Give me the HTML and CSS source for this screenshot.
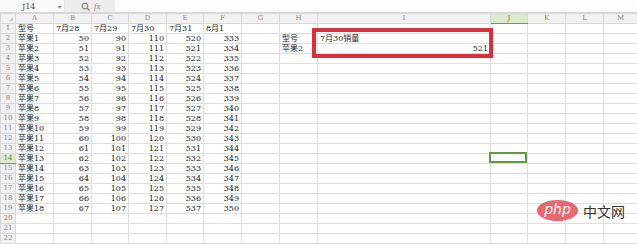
FILE: index.html
```html
<!DOCTYPE html>
<html lang="zh">
<head>
  <meta charset="UTF-8" />
  <title>销量表</title>
  <link rel="stylesheet" href="styles.css">
</head>
<body>
  <div class="formula-bar">
    <div class="name-box">
      <span class="cell-ref">J14</span>
      <span class="drop">&#9662;</span>
    </div>
    <div class="fx-tools">
      <svg class="zoom-icon" width="9" height="9" viewBox="0 0 9 9">
        <circle cx="4" cy="4" r="2.8" fill="none" stroke="#888" stroke-width="1.2" />
        <line x1="6" y1="6" x2="8.5" y2="8.5" stroke="#888" stroke-width="1.3" />
      </svg>
      <span class="fx">fx</span>
    </div>
    <div class="formula-input"></div>
  </div>

  <div class="sheet">
    <table class="grid">
      <colgroup>
        <col class="c-head">
        <col class="w38"><col class="w38"><col class="w37"><col class="w38">
        <col class="w37"><col class="w38"><col class="w38"><col class="w38">
        <col class="w-wide"><col class="w37"><col class="w38"><col class="w38">
        <col class="w-last">
      </colgroup>
      <thead>
        <tr>
          <th class="corner"><span class="tri"></span></th>
          <th>A</th><th>B</th><th>C</th><th>D</th><th>E</th><th>F</th><th>G</th><th>H</th>
          <th>I</th><th class="sel">J</th><th>K</th><th>L</th><th>M</th>
        </tr>
      </thead>
      <tbody id="rows"></tbody>
    </table>

    <div class="red-mark"></div>
    <div class="active-cell"></div>
  </div>

  <div class="watermark">
    <span class="php">php</span>
    <span class="cn">中文网</span>
  </div>

  <script>
    const rows = document.getElementById('rows');
    const colsCount = 13;

    function makeRow(n, cells) {
      const tr = document.createElement('tr');
      const th = document.createElement('th');
      th.textContent = n;
      if (n === 14) th.className = 'sel';
      tr.appendChild(th);
      for (let i = 0; i < colsCount; i++) {
        const td = document.createElement('td');
        const v = cells[i];
        if (v !== undefined && v !== '') {
          td.textContent = v;
          if (typeof v === 'number') td.className = 'num';
        }
        tr.appendChild(td);
      }
      rows.appendChild(tr);
    }

    makeRow(1, ['型号', '7月28', '7月29', '7月30', '7月31', '8月1']);
    for (let i = 1; i <= 18; i++) {
      const cells = ['苹果' + i, 49 + i, 89 + i, 109 + i, 519 + i, 332 + i];
      if (i === 1) { cells[7] = '型号'; cells[8] = '7月30销量'; }
      if (i === 2) { cells[7] = '苹果2'; cells[8] = 521; }
      makeRow(i + 1, cells);
    }
    for (let n = 20; n <= 22; n++) makeRow(n, []);
  </script>
</body>
</html>
```

FILE: styles.css
```css
body {
  margin: 0;
  width: 637px;
  height: 244px;
  overflow: hidden;
  background: #fff;
  font-family: 'DejaVu Serif', 'Noto Sans CJK SC', serif;
  position: relative;
}

.formula-bar {
  display: flex;
  height: 12px;
  border-bottom: 1px solid #d6d6d6;
  background: #f7f7f7;
  font-size: 8px;
  color: #555;
}

.name-box {
  width: 64px;
  display: flex;
  align-items: center;
  background: #fafafa;
  border-right: 1px solid #e2e2e2;
}

.cell-ref {
  margin-left: 22px;
  flex-grow: 1;
}

.drop {
  font-size: 6px;
  color: #777;
  margin-right: 3px;
}

.fx-tools {
  width: 50px;
  display: flex;
  align-items: center;
  background: #ececec;
  padding-left: 16px;
  gap: 4px;
  box-sizing: border-box;
}

.fx {
  font-style: italic;
  color: #888;
  font-family: 'Liberation Serif', serif;
  font-size: 9px;
}

.formula-input {
  flex-grow: 1;
  background: #fdfdfd;
}

.sheet {
  position: relative;
}

.grid {
  border-collapse: collapse;
  table-layout: fixed;
  width: 637px;
  font-size: 8px;
  color: #1a1a1a;
}

.c-head { width: 15px; }
.w37 { width: 37px; }
.w38 { width: 38px; }
.w-wide { width: 173px; }
.w-last { width: 34px; }

.grid tr {
  height: 10px;
}

.grid th {
  background: #f1f1f1;
  color: #8a8a8a;
  font-weight: normal;
  font-size: 7px;
  border: 1px solid #d9d9d9;
  padding: 0;
  line-height: 9px;
  text-align: center;
}

.grid th.sel {
  background: #dcebcf;
  color: #4f8a2e;
  border-bottom-color: #6aa245;
}

.corner {
  position: relative;
}

.tri {
  position: absolute;
  right: 2px;
  bottom: 2px;
  width: 0;
  height: 0;
  border-left: 4px solid transparent;
  border-bottom: 4px solid #c8c8c8;
}

.grid td {
  border: 1px solid #dedede;
  padding: 0 2px;
  line-height: 9px;
  white-space: nowrap;
  overflow: hidden;
}

.grid td.num {
  text-align: right;
}

.red-mark {
  position: absolute;
  left: 312px;
  top: 15px;
  width: 181px;
  height: 30px;
  border: 4px solid #d8313d;
  box-sizing: border-box;
}

.active-cell {
  position: absolute;
  left: 489px;
  top: 139px;
  width: 38px;
  height: 11px;
  border: 2px solid #5f9a3b;
  box-sizing: border-box;
}

.watermark {
  position: absolute;
  left: 537px;
  top: 200px;
  display: flex;
  align-items: center;
  gap: 5px;
}

.php {
  display: block;
  width: 41px;
  height: 21px;
  border-radius: 50%;
  background: #e8686f;
  color: #fff;
  font-family: 'DejaVu Sans', sans-serif;
  font-style: italic;
  font-size: 14px;
  line-height: 19px;
  text-align: center;
}

.cn {
  font-family: 'Noto Sans CJK SC', sans-serif;
  font-size: 14px;
  color: #333;
}
```
